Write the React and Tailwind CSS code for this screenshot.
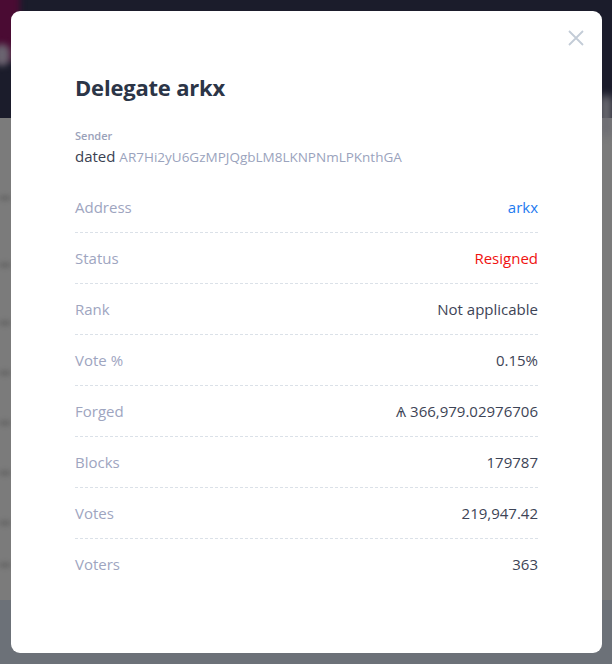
import React from "react";

const rows = [
  { label: "Address", value: "arkx", cls: "text-[#1d7bf0]" },
  { label: "Status", value: "Resigned", cls: "text-[#f0120f]" },
  { label: "Rank", value: "Not applicable", cls: "text-[#3d4456]" },
  { label: "Vote %", value: "0.15%", cls: "text-[#3d4456]" },
  { label: "Forged", value: "Ѧ 366,979.02976706", cls: "text-[#3d4456]" },
  { label: "Blocks", value: "179787", cls: "text-[#3d4456]" },
  { label: "Votes", value: "219,947.42", cls: "text-[#3d4456]" },
  { label: "Voters", value: "363", cls: "text-[#3d4456]" },
];

export default function App() {
  return (
    <div className="relative w-[612px] h-[664px] overflow-hidden bg-[#7b7b7b] font-['Open_Sans','Lato',sans-serif]">
      {/* blurred page behind the overlay */}
      <div className="flex flex-col h-full">
        <div className="h-[118px] bg-[#1b1c2b] relative">
          <div className="absolute left-[-20px] top-[-10px] w-[40px] h-[70px] bg-[#4a0b33] blur-[3px]" />
          <div className="absolute left-[-6px] top-[44px] w-[16px] h-[22px] rounded-full bg-[#6a6470] blur-[3px]" />
          <div className="absolute right-0 top-[96px] w-[12px] h-[40px] bg-[#6e6e74] blur-[4px]" />
        </div>
        <div className="flex-1 flex flex-col">
          {[195, 262, 320, 370, 420, 470, 520, 562].map((y) => (
            <div key={y} className="absolute left-0 w-[10px] h-[6px] bg-[#6a6a6a] blur-[2px]" style={{ top: y }} />
          ))}
        </div>
        <div className="h-[64px] bg-[#6c7178]" />
      </div>

      {/* modal */}
      <div className="absolute inset-0 p-[11px] pr-[10px]">
        <div className="relative h-full bg-white rounded-[9px] px-16 pt-[62px]">
          <button className="absolute right-[17px] top-[18px] w-[18px] h-[18px] text-[#c3ccd7]">
            <svg viewBox="0 0 18 18" width="18" height="18" fill="none" stroke="currentColor" strokeWidth="1.8">
              <path d="M2 2 L16 16 M16 2 L2 16" />
            </svg>
          </button>
          <h2 className="text-[22px] leading-[28px] font-bold text-[#2c3547] tracking-[-0.2px]">Delegate arkx</h2>
          <div className="mt-[28px] text-[11px] leading-[14px] font-semibold text-[#9aa2ba]">Sender</div>
          <div className="mt-[3px] leading-[20px]">
            <span className="text-[15px] text-[#3a4152]">dated </span>
            <span className="text-[13.5px] text-[#9aa3bd]">AR7Hi2yU6GzMPJQgbLM8LKNPNmLPKnthGA</span>
          </div>
          <div className="mt-[15px] flex flex-col">
            {rows.map((r, i) => (
              <div
                key={r.label}
                className={
                  "flex justify-between items-center h-[51px] text-[15px] " +
                  (i < rows.length - 1 ? "border-b border-dashed border-[#dbe1e8]" : "")
                }
              >
                <span className="text-[#9ea5bf]">{r.label}</span>
                <span className={r.cls}>{r.value}</span>
              </div>
            ))}
          </div>
        </div>
      </div>
    </div>
  );
}
